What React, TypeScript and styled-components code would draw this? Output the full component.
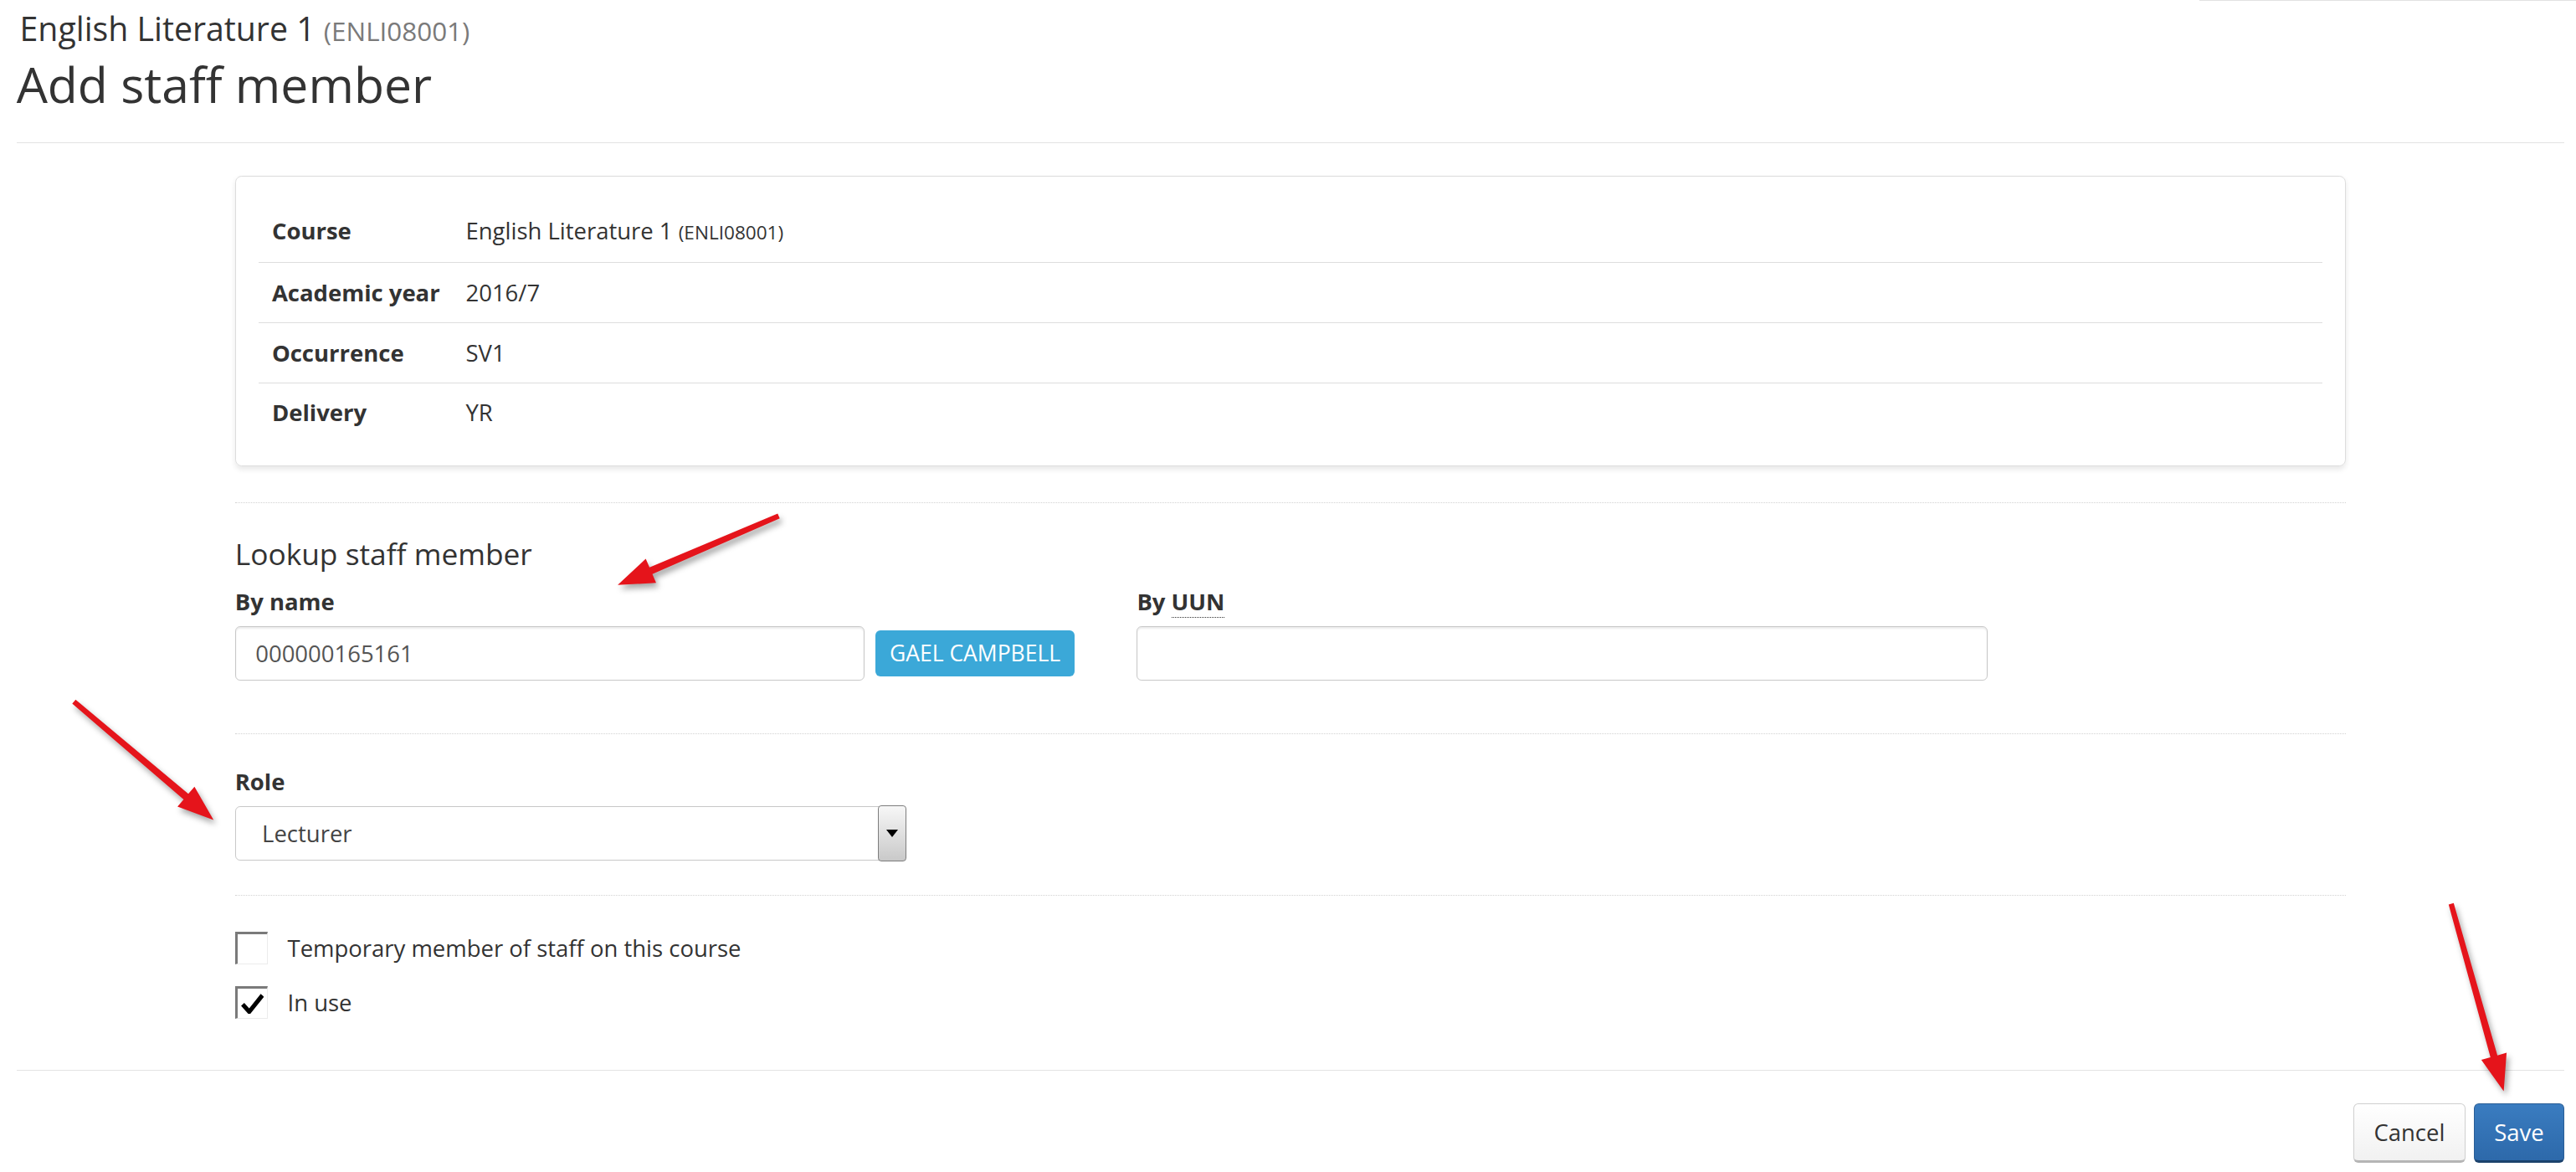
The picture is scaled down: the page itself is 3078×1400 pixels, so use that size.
import React from "react";
import { createGlobalStyle, styled } from "styled-components";

// the reference is a ~1568px wide page shot at ~2x
const SCALE = 3078 / 1568;

const GlobalStyle = createGlobalStyle`
  html, body {
    margin: 0;
    padding: 0;
    background: #fff;
  }
  body {
    font-family: "Open Sans", "Liberation Sans", sans-serif;
    color: #333;
  }
  * {
    box-sizing: border-box;
  }
`;

const Page = styled.div`
  zoom: ${SCALE};
  position: relative;
  width: 1568px;
  height: 713px;
  padding: 0 7px 0 10px;
  overflow: hidden;
  font-size: 14px;
  line-height: 20px;
`;

const TopEdge = styled.div`
  margin-left: auto;
  margin-right: -7px;
  width: 229px;
  border-top: 1px solid #e2e2e2;
`;

const Header = styled.header`
  padding-top: 6px;
`;

const Subtitle = styled.div`
  font-size: 20px;
  line-height: 22px;
  padding-left: 2px;
`;

const Code = styled.small`
  font-size: 16px;
  color: #7a7a7a;
`;

const Title = styled.h1`
  margin: 5px 0 0;
  font-size: 30px;
  line-height: 33px;
  font-weight: 400;
`;

const Rule = styled.div<{ $top: number }>`
  margin-top: ${(p) => p.$top}px;
  border-top: 1px solid #e3e3e3;
`;

const Content = styled.main`
  margin: 20px 0 0 133px;
  width: 1285px;
`;

const Card = styled.section`
  border: 1px solid #ddd;
  border-radius: 4px;
  box-shadow: 0 2px 3px rgba(0, 0, 0, 0.09);
  padding: 15px 14px 14px;
`;

const Row = styled.div`
  display: flex;
  padding: 8px;
  border-top: 1px solid #ddd;
  &:first-child {
    border-top: none;
  }
`;

const RowLabel = styled.div`
  width: 118px;
  font-weight: 700;
`;

const RowValue = styled.div`
  flex: 1;
`;

const ValueCode = styled.small`
  font-size: 11.5px;
`;

const Dotted = styled.div<{ $top: number }>`
  margin-top: ${(p) => p.$top}px;
  border-top: 1px dotted #d2d2d2;
`;

const SectionTitle = styled.h3`
  margin: 21px 0 0;
  font-size: 18px;
  line-height: 20px;
  font-weight: 400;
`;

const FieldRow = styled.div`
  display: flex;
  gap: 38px;
  margin-top: 9px;
`;

const Field = styled.div<{ $top?: number }>`
  display: flex;
  flex-direction: column;
  margin-top: ${(p) => p.$top ?? 0}px;
`;

const Label = styled.label`
  font-weight: 700;
  line-height: 20px;
  margin-bottom: 5px;
`;

const Abbr = styled.abbr`
  text-decoration: none;
  border-bottom: 1px dotted #333;
`;

const InputGroup = styled.div`
  display: flex;
  align-items: center;
  gap: 7px;
`;

const TextInput = styled.input<{ $w: number }>`
  width: ${(p) => p.$w}px;
  height: 33px;
  border: 1px solid #c8c8c8;
  border-radius: 3px;
  box-shadow: inset 0 1px 1px rgba(0, 0, 0, 0.08);
  padding: 0 12px;
  font: inherit;
  color: #555;
  outline: none;
`;

const LookupButton = styled.button`
  width: 121px;
  height: 28px;
  padding: 0;
  border: none;
  border-radius: 3px;
  background: #3ba8d8;
  color: #fff;
  font: inherit;
  font-size: 13.5px;
  text-transform: uppercase;
`;

const SelectBox = styled.div`
  display: flex;
  width: 408px;
  height: 33px;
  border: 1px solid #c8c8c8;
  border-radius: 3px;
`;

const SelectValue = styled.div`
  flex: 1;
  display: flex;
  align-items: center;
  padding-left: 16px;
  color: #444;
`;

const SelectArrow = styled.div`
  width: 17px;
  margin: -1px -1px -1px 0;
  border: 1px solid #7d7d7d;
  border-radius: 2px;
  background: linear-gradient(#f7f7f7, #c9c9c9);
  display: flex;
  align-items: center;
  justify-content: center;
  &::after {
    content: "";
    border-left: 4px solid transparent;
    border-right: 4px solid transparent;
    border-top: 5px solid #000;
  }
`;

const CheckRow = styled.label<{ $top: number }>`
  display: flex;
  align-items: center;
  gap: 12px;
  margin-top: ${(p) => p.$top}px;
  height: 20px;
`;

const CheckBox = styled.span`
  width: 20px;
  height: 20px;
  border-top: 2px solid #7a7a7a;
  border-left: 2px solid #7a7a7a;
  border-right: 1px solid #ececec;
  border-bottom: 1px solid #ececec;
  display: flex;
  align-items: center;
  justify-content: center;
`;

const Footer = styled.footer`
  display: flex;
  justify-content: flex-end;
  gap: 5px;
  margin-top: 20px;
`;

const Button = styled.button<{ $primary?: boolean }>`
  height: 36px;
  padding: 0 12px;
  border-radius: 3px;
  font: inherit;
  font-size: 14px;
  border: 1px solid ${(p) => (p.$primary ? "#2a5e96" : "#cfcfcf")};
  border-bottom: 2px solid ${(p) => (p.$primary ? "#1b426c" : "#b5b5b5")};
  background: ${(p) =>
    p.$primary
      ? "linear-gradient(#3a7cc0, #2d69aa)"
      : "linear-gradient(#ffffff, #f1f1f1)"};
  color: ${(p) => (p.$primary ? "#fff" : "#333")};
`;

const Overlay = styled.svg`
  position: absolute;
  left: 0;
  top: 0;
  width: 1568px;
  height: 713px;
  pointer-events: none;
  filter: drop-shadow(2px 3px 2px rgba(0, 0, 0, 0.35));
`;

type Pt = [number, number];

const Arrow = ({ from, to }: { from: Pt; to: Pt }) => {
  const dx = to[0] - from[0];
  const dy = to[1] - from[1];
  const len = Math.hypot(dx, dy);
  const ux = dx / len;
  const uy = dy / len;
  const nx = -uy;
  const ny = ux;
  const head = 22;
  const half = 8;
  const bx = to[0] - ux * head;
  const by = to[1] - uy * head;
  const p = (x: number, y: number, k: number) =>
    `${x + nx * k},${y + ny * k}`;
  const pts = [
    p(from[0], from[1], 1.6),
    p(bx, by, 2.2),
    p(bx, by, half),
    `${to[0]},${to[1]}`,
    p(bx, by, -half),
    p(bx, by, -2.2),
    p(from[0], from[1], -1.6),
  ].join(" ");
  return <polygon points={pts} fill="#e5141b" />;
};

const CheckMark = () => (
  <svg width="14" height="13" viewBox="0 0 14 13">
    <path d="M1 7 L5 11.5 L13 1.5" fill="none" stroke="#000" strokeWidth="2.6" />
  </svg>
);

const details = [
  { label: "Course", value: "English Literature 1", code: "(ENLI08001)" },
  { label: "Academic year", value: "2016/7" },
  { label: "Occurrence", value: "SV1" },
  { label: "Delivery", value: "YR" },
];

export default function App() {
  return (
    <>
      <GlobalStyle />
      <Page>
        <TopEdge />
        <Header>
          <Subtitle>
            English Literature 1 <Code>(ENLI08001)</Code>
          </Subtitle>
          <Title>Add staff member</Title>
        </Header>
        <Rule $top={19} />

        <Content>
          <Card>
            {details.map((d) => (
              <Row key={d.label}>
                <RowLabel>{d.label}</RowLabel>
                <RowValue>
                  {d.value} {d.code && <ValueCode>{d.code}</ValueCode>}
                </RowValue>
              </Row>
            ))}
          </Card>

          <Dotted $top={22} />
          <SectionTitle>Lookup staff member</SectionTitle>
          <FieldRow>
            <Field>
              <Label>By name</Label>
              <InputGroup>
                <TextInput $w={383} defaultValue="000000165161" />
                <LookupButton>Gael Campbell</LookupButton>
              </InputGroup>
            </Field>
            <Field>
              <Label>
                By <Abbr title="University User Name">UUN</Abbr>
              </Label>
              <TextInput $w={518} />
            </Field>
          </FieldRow>

          <Dotted $top={32} />
          <Field $top={19}>
            <Label>Role</Label>
            <SelectBox>
              <SelectValue>Lecturer</SelectValue>
              <SelectArrow />
            </SelectBox>
          </Field>

          <Dotted $top={21} />
          <CheckRow $top={22}>
            <CheckBox />
            Temporary member of staff on this course
          </CheckRow>
          <CheckRow $top={13}>
            <CheckBox>
              <CheckMark />
            </CheckBox>
            In use
          </CheckRow>
        </Content>

        <Rule $top={31} />
        <Footer>
          <Button>Cancel</Button>
          <Button $primary>Save</Button>
        </Footer>

        <Overlay viewBox="0 0 1568 713">
          <Arrow from={[474, 314]} to={[376, 356]} />
          <Arrow from={[45, 427]} to={[130, 499]} />
          <Arrow from={[1492, 550]} to={[1524, 664]} />
        </Overlay>
      </Page>
    </>
  );
}
